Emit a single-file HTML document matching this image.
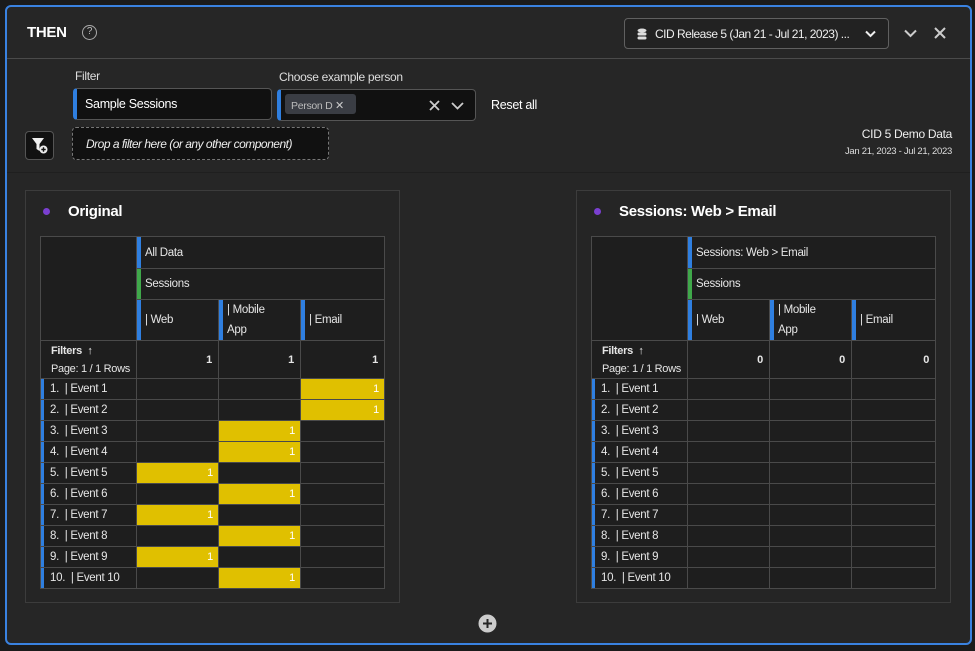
<!DOCTYPE html>
<html><head><meta charset="utf-8">
<style>
*{box-sizing:border-box;margin:0;padding:0}
body{width:975px;height:651px;background:#1b1b1b;font-family:"Liberation Sans",sans-serif;color:#e8e8e8;position:relative;overflow:hidden;font-size:12px;letter-spacing:-0.3px}
.panel{position:absolute;left:5px;top:5px;width:967px;height:640px;border:2px solid #3a82e0;border-radius:6px;background:#262626}
.hdrline{position:absolute;left:0;right:0;top:51px;height:1px;background:#4a4a4a}
.sec2{position:absolute;left:0;right:0;top:165px;height:1px;background:#1f1f1f}
.abs{position:absolute}
.box{position:absolute;background:#111;border:1px solid #555;border-radius:4px}
.card{position:absolute;top:190px;width:375px;height:413px;border:1px solid #3c3c3c;background:#252525}
table{position:absolute;border-collapse:collapse;table-layout:fixed;background:#1e1e1e}
td{border:1px solid #4a4a4a;font-size:11.5px;color:#e6e6e6;padding:0 0 0 8px;white-space:nowrap;position:relative;overflow:hidden}
td.h::before{content:"";position:absolute;left:0;top:0;bottom:0;width:4px;background:#2f7fe0}
td.g::before{background:#3fa84a}
td.n{text-align:right;padding-right:6px;font-weight:bold;font-size:11px;overflow:visible}
td.y{background:#e0c000;text-align:right;padding-right:5px;color:#fff;font-size:11px}
td.r{padding-left:9px}
td.r::before{content:"";position:absolute;left:0;top:0;bottom:0;width:3px;background:#2f7fe0}
td.f{line-height:18px;padding-left:10px;font-size:11px;overflow:visible}
.dot{position:absolute;width:7px;height:7px;border-radius:50%;background:#7a3fd0}
.ttl{position:absolute;font-size:15px;font-weight:bold;color:#fff}
</style></head><body>
<div class="panel">
 <div class="abs" style="left:20px;top:17px;font-size:15px;font-weight:bold;color:#fff">THEN</div>
 <div class="abs" style="left:75px;top:18px;width:15px;height:15px;border:1.5px solid #aaa;border-radius:50%;font-size:10px;color:#bbb;text-align:center;line-height:12px">?</div>
 <div class="box" style="left:617px;top:11px;width:265px;height:31px;background:#222;border-color:#606060">
  <svg class="abs" style="left:12px;top:9px" width="10" height="12" viewBox="0 0 10 12"><ellipse cx="5" cy="2.5" rx="4.5" ry="2" fill="#ddd"/><rect x="0.5" y="4.5" width="9" height="3" rx="1.5" fill="#ddd"/><rect x="0.5" y="8.5" width="9" height="3" rx="1.5" fill="#ddd"/></svg>
  <div class="abs" style="left:30px;top:8px;font-size:12px;color:#eee;letter-spacing:-0.5px">CID Release 5 (Jan 21 - Jul 21, 2023) ...</div>
  <svg class="abs" style="left:240px;top:11px" width="11" height="8"><path d="M1 1.5L5.5 6L10 1.5" stroke="#eee" stroke-width="2" fill="none"/></svg>
 </div>
 <svg class="abs" style="left:897px;top:22px" width="13" height="9"><path d="M1 1.5L6.5 7L12 1.5" stroke="#ccc" stroke-width="2" fill="none"/></svg>
 <svg class="abs" style="left:927px;top:20px" width="12" height="12"><path d="M1 1L11 11M11 1L1 11" stroke="#ccc" stroke-width="2"/></svg>
 <div class="hdrline"></div>
 <div class="abs" style="left:68px;top:62px;font-size:12px;color:#ddd">Filter</div>
 <div class="abs" style="left:272px;top:63px;font-size:12px;color:#ddd">Choose example person</div>
 <div class="box" style="left:66px;top:81px;width:199px;height:32px;border-left:4px solid #2f7fe0">
  <div class="abs" style="left:8px;top:8px;font-size:12.5px;color:#fff">Sample Sessions</div></div>
 <div class="box" style="left:270px;top:82px;width:199px;height:32px;border-left:4px solid #2f7fe0">
  <div class="abs" style="left:4px;top:4px;width:71px;height:20px;background:#3a3d44;border-radius:3px;font-size:10.5px;color:#bbb;padding:5px 0 0 6px">Person D <span style="color:#ccc;font-size:11px">✕</span></div>
  <svg class="abs" style="left:148px;top:10px" width="11" height="11"><path d="M1 1L10 10M10 1L1 10" stroke="#ccc" stroke-width="1.8"/></svg>
  <svg class="abs" style="left:170px;top:12px" width="13" height="8"><path d="M1 1L6.5 6.5L12 1" stroke="#ccc" stroke-width="1.8" fill="none"/></svg>
 </div>
 <div class="abs" style="left:484px;top:91px;font-size:12.5px;color:#fff">Reset all</div>
 <div class="box" style="left:18px;top:124px;width:29px;height:29px;background:#111;border-color:#555">
  <svg class="abs" style="left:5px;top:5px" width="18" height="18" viewBox="0 0 18 18"><path d="M1 1H13L8.5 7V14L5.5 12V7Z" fill="#eee"/><circle cx="12.5" cy="12.5" r="4" fill="#eee"/><path d="M12.5 10.3V14.7M10.3 12.5H14.7" stroke="#111" stroke-width="1.4"/></svg>
 </div>
 <div class="box" style="left:65px;top:120px;width:257px;height:33px;border:1px dashed #777;background:#111">
  <div class="abs" style="left:13px;top:9px;font-size:12px;font-style:italic;color:#eee;letter-spacing:-0.5px">Drop a filter here (or any other component)</div></div>
 <div class="abs" style="right:18px;top:120px;font-size:12px;color:#eee;text-align:right">CID 5 Demo Data</div>
 <div class="abs" style="right:18px;top:139px;font-size:9.5px;color:#ddd;text-align:right">Jan 21, 2023 - Jul 21, 2023</div>
 <div class="sec2"></div>
</div>

<div class="card" style="left:25px"></div>
<div class="dot" style="left:43px;top:208px"></div>
<div class="ttl" style="left:68px;top:203px">Original</div>
<table style="left:40px;top:236px;width:344px">
<colgroup><col style="width:96px"><col style="width:82px"><col style="width:82px"><col style="width:84px"></colgroup>
<tr style="height:32px"><td rowspan="3"></td><td class="h" colspan="3">All Data</td></tr>
<tr style="height:31px"><td class="h g" colspan="3">Sessions</td></tr>
<tr style="height:41px"><td class="h">| Web</td><td class="h" style="line-height:20px">| Mobile<br>App</td><td class="h">| Email</td></tr>
<tr style="height:38px"><td class="f"><b>Filters</b> &nbsp;↑<br>Page: 1 / 1 Rows</td><td class="n">1</td><td class="n">1</td><td class="n">1</td></tr>
<tr style="height:21px"><td class="r">1. &nbsp;| Event 1</td><td></td><td></td><td class="y">1</td></tr>
<tr style="height:21px"><td class="r">2. &nbsp;| Event 2</td><td></td><td></td><td class="y">1</td></tr>
<tr style="height:21px"><td class="r">3. &nbsp;| Event 3</td><td></td><td class="y">1</td><td></td></tr>
<tr style="height:21px"><td class="r">4. &nbsp;| Event 4</td><td></td><td class="y">1</td><td></td></tr>
<tr style="height:21px"><td class="r">5. &nbsp;| Event 5</td><td class="y">1</td><td></td><td></td></tr>
<tr style="height:21px"><td class="r">6. &nbsp;| Event 6</td><td></td><td class="y">1</td><td></td></tr>
<tr style="height:21px"><td class="r">7. &nbsp;| Event 7</td><td class="y">1</td><td></td><td></td></tr>
<tr style="height:21px"><td class="r">8. &nbsp;| Event 8</td><td></td><td class="y">1</td><td></td></tr>
<tr style="height:21px"><td class="r">9. &nbsp;| Event 9</td><td class="y">1</td><td></td><td></td></tr>
<tr style="height:21px"><td class="r">10. &nbsp;| Event 10</td><td></td><td class="y">1</td><td></td></tr>
</table>

<div class="card" style="left:576px"></div>
<div class="dot" style="left:594px;top:208px"></div>
<div class="ttl" style="left:619px;top:203px">Sessions: Web &gt; Email</div>
<table style="left:591px;top:236px;width:344px">
<colgroup><col style="width:96px"><col style="width:82px"><col style="width:82px"><col style="width:84px"></colgroup>
<tr style="height:32px"><td rowspan="3"></td><td class="h" colspan="3">Sessions: Web &gt; Email</td></tr>
<tr style="height:31px"><td class="h g" colspan="3">Sessions</td></tr>
<tr style="height:41px"><td class="h">| Web</td><td class="h" style="line-height:20px">| Mobile<br>App</td><td class="h">| Email</td></tr>
<tr style="height:38px"><td class="f"><b>Filters</b> &nbsp;↑<br>Page: 1 / 1 Rows</td><td class="n">0</td><td class="n">0</td><td class="n">0</td></tr>
<tr style="height:21px"><td class="r">1. &nbsp;| Event 1</td><td></td><td></td><td></td></tr>
<tr style="height:21px"><td class="r">2. &nbsp;| Event 2</td><td></td><td></td><td></td></tr>
<tr style="height:21px"><td class="r">3. &nbsp;| Event 3</td><td></td><td></td><td></td></tr>
<tr style="height:21px"><td class="r">4. &nbsp;| Event 4</td><td></td><td></td><td></td></tr>
<tr style="height:21px"><td class="r">5. &nbsp;| Event 5</td><td></td><td></td><td></td></tr>
<tr style="height:21px"><td class="r">6. &nbsp;| Event 6</td><td></td><td></td><td></td></tr>
<tr style="height:21px"><td class="r">7. &nbsp;| Event 7</td><td></td><td></td><td></td></tr>
<tr style="height:21px"><td class="r">8. &nbsp;| Event 8</td><td></td><td></td><td></td></tr>
<tr style="height:21px"><td class="r">9. &nbsp;| Event 9</td><td></td><td></td><td></td></tr>
<tr style="height:21px"><td class="r">10. &nbsp;| Event 10</td><td></td><td></td><td></td></tr>
</table>

<svg class="abs" style="left:478px;top:614px" width="19" height="19"><circle cx="9.5" cy="9.5" r="9" fill="#ccc"/><path d="M9.5 5V14M5 9.5H14" stroke="#262626" stroke-width="2"/></svg>
</body></html>
